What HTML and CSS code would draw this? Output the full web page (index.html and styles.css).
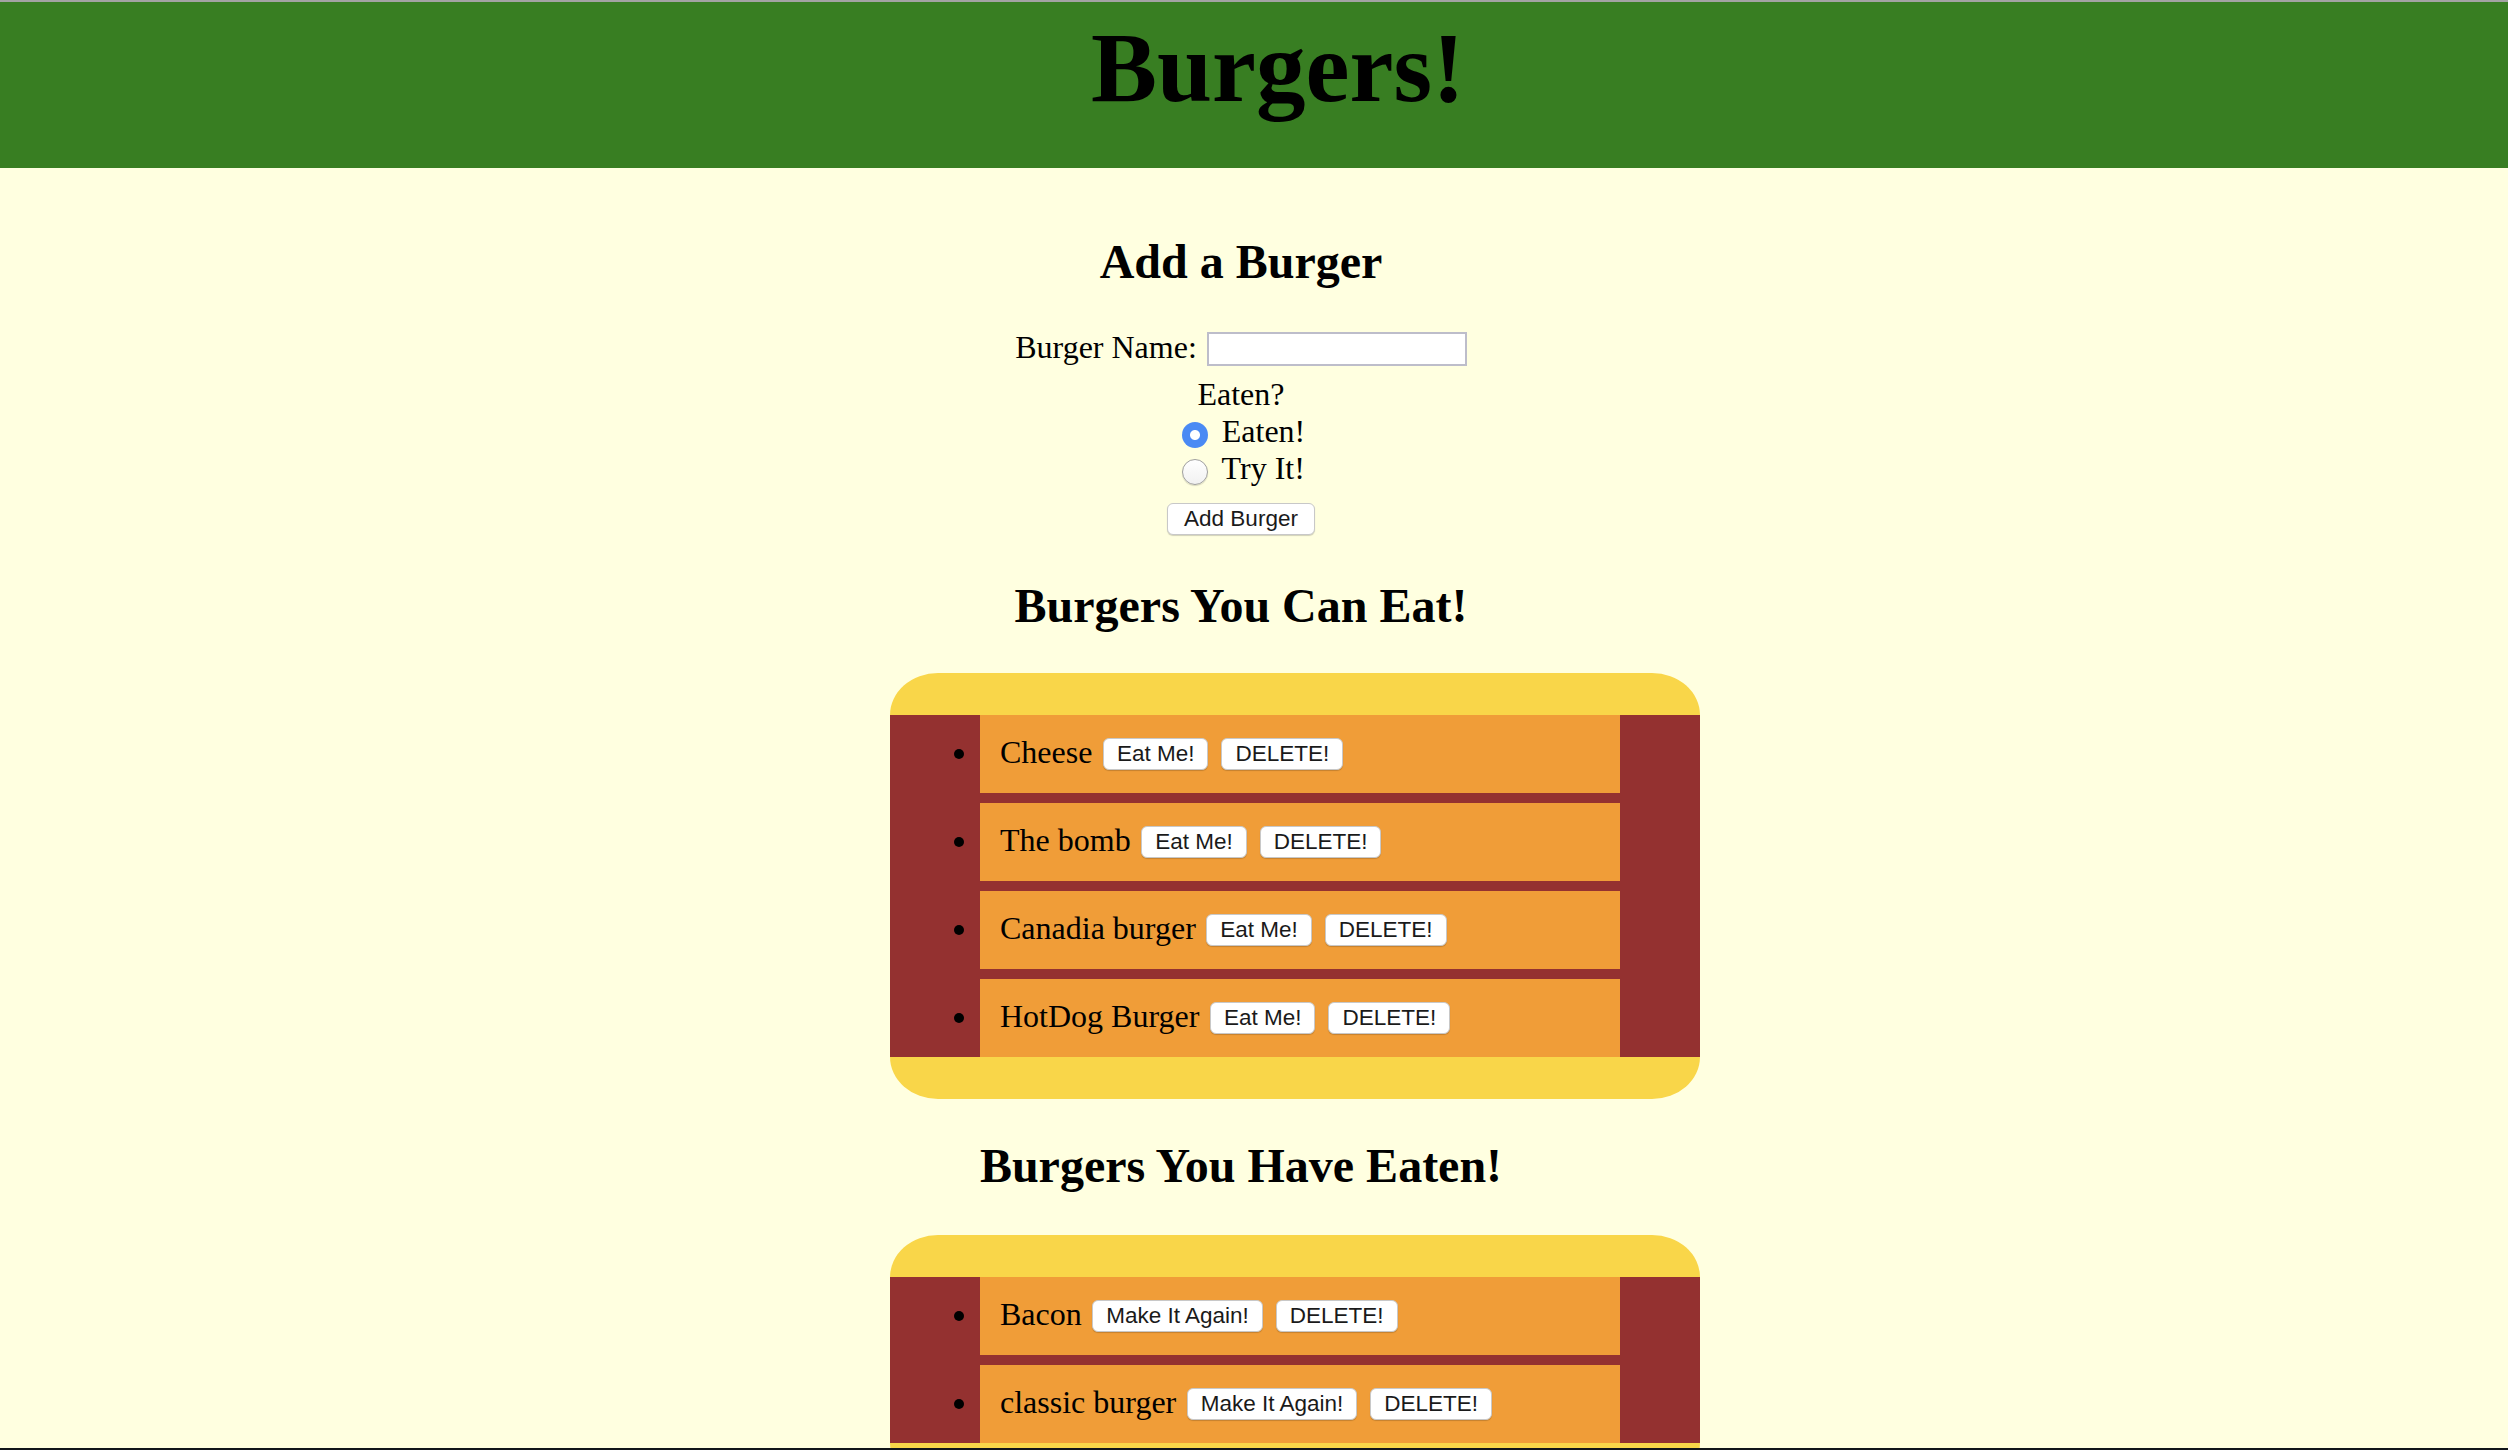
FILE: index.html
```html
<!DOCTYPE html>
<html lang="en">
<head>
    <meta charset="UTF-8">
    <meta name="viewport" content="width=device-width, initial-scale=1.0">
    <title>Burgers!</title>
    <link rel="stylesheet" href="styles.css">
</head>
<body>
    <header>
        <h1>Burgers!</h1>
    </header>

    <main>
        <h2 class="add-title">Add a Burger</h2>
        <form id="burger-form">
            <div class="name-row">
                <label for="burger-name">Burger Name:</label>
                <input type="text" id="burger-name" name="burger_name">
            </div>
            <div class="eaten-label">Eaten?</div>
            <div class="radio-line"><input type="radio" name="devoured" id="eaten-yes" value="1" checked> <label for="eaten-yes">Eaten!</label></div>
            <div class="radio-line"><input type="radio" name="devoured" id="eaten-no" value="0"> <label for="eaten-no">Try It!</label></div>
            <button type="submit" class="add-btn">Add Burger</button>
        </form>

        <h2 class="list-title">Burgers You Can Eat!</h2>
        <div class="burger">
            <div class="bun top"></div>
            <ul class="patties" id="uneaten-list">
                <!-- JavaScript will populate this list -->
            </ul>
            <div class="bun bottom"></div>
        </div>

        <h2 class="list-title eaten-title">Burgers You Have Eaten!</h2>
        <div class="burger eaten-burger">
            <div class="bun top"></div>
            <ul class="patties" id="eaten-list">
                <!-- JavaScript will populate this list -->
            </ul>
            <div class="bun bottom"></div>
        </div>
    </main>

    <div class="screen-edge"></div>

    <script>
// Burgers still waiting to be eaten
const uneaten = ["Cheese", "The bomb", "Canadia burger", "HotDog Burger"];

// Burgers already eaten
const eaten = ["Bacon", "classic burger"];

function loadList(id, names, action) {
    const ul = document.getElementById(id);
    ul.innerHTML = '';
    names.forEach(name => {
        ul.innerHTML += `<li>${name} <button class="change">${action}</button> <button class="delete">DELETE!</button></li>`;
    });
}

loadList('uneaten-list', uneaten, 'Eat Me!');
loadList('eaten-list', eaten, 'Make It Again!');

document.getElementById('burger-form').onsubmit = function(e) {
    e.preventDefault();
};
    </script>
</body>
</html>
```

FILE: styles.css
```css
body {
    margin: 0;
    font-family: "Liberation Serif", "Times New Roman", serif;
    background-color: #ffffe0;
    color: #000;
}

header {
    background-color: #387e22;
    border-top: 2px solid #a3a3a3;
    padding: 11px 0 45px 48px;
    text-align: center;
}

header h1 {
    margin: 0;
    font-size: 99px;
    line-height: 110px;
    font-weight: bold;
}

main {
    padding-right: 26px;
    text-align: center;
}

h2 {
    margin: 0;
    font-size: 48px;
    line-height: 55px;
    font-weight: bold;
}

.add-title {
    margin-top: 66px;
}

form {
    font-size: 32px;
    line-height: 37px;
}

.name-row {
    display: flex;
    justify-content: center;
    align-items: flex-end;
    gap: 10px;
    margin-top: 40px;
}

.name-row input {
    width: 260px;
    height: 34px;
    box-sizing: border-box;
    border: 2px solid #bdbdca;
    background: #fff;
    padding: 0 6px;
    font-size: 24px;
}

.eaten-label {
    margin-top: 10px;
}

.radio-line {
    padding-right: 5px;
}

.radio-line input {
    appearance: none;
    -webkit-appearance: none;
    width: 26px;
    height: 26px;
    margin: 0 6px 0 10px;
    border-radius: 50%;
    box-sizing: border-box;
    border: 1px solid #9f9f9f;
    background: linear-gradient(#fff, #f1f1f1);
    box-shadow: 0 1px 1px rgba(0, 0, 0, 0.15);
    vertical-align: middle;
}

.radio-line input:checked {
    border: none;
    box-shadow: none;
    background: radial-gradient(circle, #fff 0 4.5px, #4a8af4 5.5px);
}

button {
    height: 32px;
    box-sizing: border-box;
    padding: 0 13px;
    font-family: "Liberation Sans", Arial, sans-serif;
    font-size: 22.5px;
    line-height: 30px;
    color: #1a1a1a;
    background: #fff;
    border: 1px solid #c8c8c8;
    border-radius: 6px;
    box-shadow: 0 1px 1px rgba(0, 0, 0, 0.18);
    cursor: pointer;
}

.add-btn {
    display: block;
    margin: 16px auto 0;
    padding: 0 16px;
}

.list-title {
    margin-top: 43px;
}

.eaten-title {
    margin-top: 39px;
}

.burger {
    width: 810px;
    margin: 40px 0 0 calc(50% - 351px);
}

.eaten-burger {
    margin-top: 42px;
}

.bun {
    height: 42px;
    background-color: #f9d649;
}

.bun.top {
    border-radius: 48px 48px 0 0 / 42px 42px 0 0;
}

.bun.bottom {
    border-radius: 0 0 48px 48px / 0 0 42px 42px;
}

.patties {
    margin: 0;
    padding: 0 80px 0 90px;
    background-color: #943130;
    text-align: left;
    font-size: 32px;
}

.patties li {
    height: 78px;
    box-sizing: border-box;
    padding: 19px 0 0 20px;
    line-height: 36px;
    background-color: #f09d38;
}

.patties li + li {
    margin-top: 10px;
}

.patties button {
    vertical-align: top;
    margin: 4px 2.5px 0;
}

.screen-edge {
    position: fixed;
    left: 0;
    right: 0;
    bottom: 0;
    height: 2px;
    background-color: #11151a;
}
```
